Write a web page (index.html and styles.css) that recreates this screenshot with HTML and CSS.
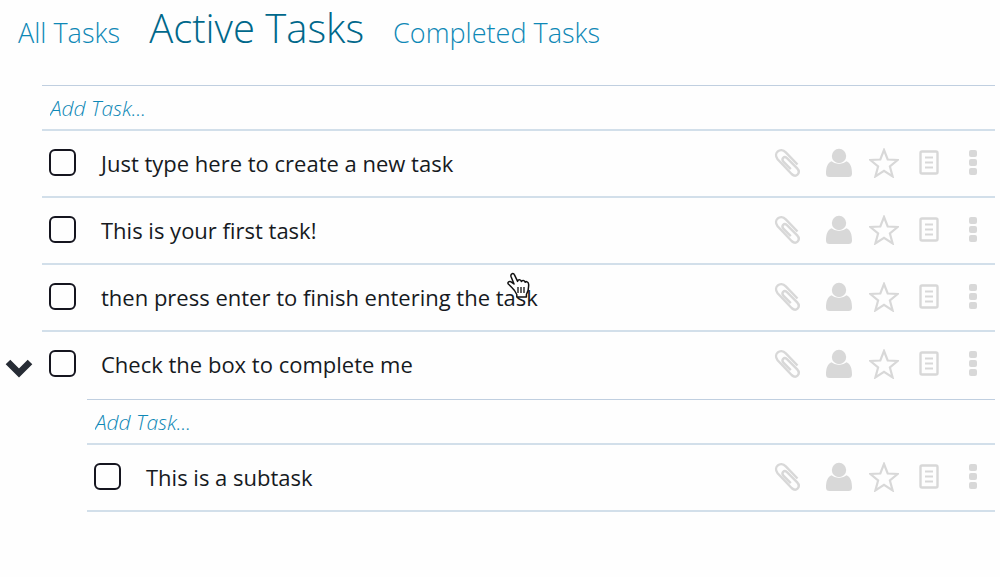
FILE: index.html
```html
<!DOCTYPE html>
<html lang="en">
<head>
<meta charset="utf-8">
<meta name="viewport" content="width=device-width, initial-scale=1">
<title>Tasks</title>
<link rel="stylesheet" href="styles.css">
</head>
<body>
<svg class="sprite" aria-hidden="true">
  <symbol id="clip" viewBox="0 0 30 32"><path d="M24.5 17.5 12.8 5.3C7.2-.2-.2 6.2 4.6 12.2L18.6 27c4.6 4.2 9.6-1 5.6-5.6L14 11.2c-3-2.6-6 .4-3.6 3.4l7.4 7.6" fill="none" stroke="currentColor" stroke-width="2.4"/></symbol>
  <symbol id="person" viewBox="0 0 28 30"><circle cx="14" cy="8" r="7.2"/><path d="M6.5 13.2Q14 19 21.5 13.2C25.5 15 27 19 27 25.500Q27 29 23.500 29H4.500Q1 29 1 25.500C1 19 2.500 15 6.500 13.200Z"/></symbol>
  <symbol id="star" viewBox="0 0 30 30"><path d="m15 2 3.700 9.500 10 .5-7.800 6.500 2.700 9.900L15 22.900l-8.600 5.500L9.100 18.500 1.300 12l10-.5Z" fill="none" stroke="currentColor" stroke-width="2.200"/></symbol>
  <symbol id="note" viewBox="0 0 20 26"><rect x="1.500" y="1.500" width="17" height="22" rx="1.500" fill="none" stroke="currentColor" stroke-width="2.400"/><path d="M6 7.500h8M6 12.500h8M6 17.500h8" stroke="currentColor" stroke-width="2"/></symbol>
  <symbol id="dots" viewBox="0 0 8 28"><rect y="1" width="8" height="7" rx="2"/><rect y="10" width="8" height="7" rx="2"/><rect y="19" width="8" height="7" rx="2"/></symbol>
</svg>

<nav class="tabs">
  <a class="tab" href="#all">All Tasks</a>
  <a class="tab tab-active" href="#active" aria-current="page">Active Tasks</a>
  <a class="tab" href="#completed">Completed Tasks</a>
</nav>

<main class="board">
  <input class="add-task" type="text" placeholder="Add Task..." aria-label="Add task">
  <ul class="list">
    <li class="task">
      <input class="check" type="checkbox" id="t1"><label class="name" for="t1">Just type here to create a new task</label>
      <div class="actions">
        <button class="action clip" aria-label="Attach"><svg><use href="#clip"/></svg></button>
        <button class="action person" aria-label="Assign"><svg><use href="#person"/></svg></button>
        <button class="action star" aria-label="Star"><svg><use href="#star"/></svg></button>
        <button class="action note" aria-label="Notes"><svg><use href="#note"/></svg></button>
        <button class="action dots" aria-label="More"><svg><use href="#dots"/></svg></button>
      </div>
    </li>
    <li class="task">
      <input class="check" type="checkbox" id="t2"><label class="name" for="t2">This is your first task!</label>
      <div class="actions">
        <button class="action clip" aria-label="Attach"><svg><use href="#clip"/></svg></button>
        <button class="action person" aria-label="Assign"><svg><use href="#person"/></svg></button>
        <button class="action star" aria-label="Star"><svg><use href="#star"/></svg></button>
        <button class="action note" aria-label="Notes"><svg><use href="#note"/></svg></button>
        <button class="action dots" aria-label="More"><svg><use href="#dots"/></svg></button>
      </div>
    </li>
    <li class="task">
      <input class="check" type="checkbox" id="t3"><label class="name" for="t3">then press enter to finish entering the task</label>
      <div class="actions">
        <button class="action clip" aria-label="Attach"><svg><use href="#clip"/></svg></button>
        <button class="action person" aria-label="Assign"><svg><use href="#person"/></svg></button>
        <button class="action star" aria-label="Star"><svg><use href="#star"/></svg></button>
        <button class="action note" aria-label="Notes"><svg><use href="#note"/></svg></button>
        <button class="action dots" aria-label="More"><svg><use href="#dots"/></svg></button>
      </div>
    </li>
    <li class="group">
      <div class="task task-parent">
        <button class="toggle" aria-label="Collapse subtasks" aria-expanded="true"><svg viewBox="0 0 28 20"><path d="m3 4 11 11L25 4" fill="none" stroke="currentColor" stroke-width="6.500"/></svg></button>
        <input class="check" type="checkbox" id="t4"><label class="name" for="t4">Check the box to complete me</label>
        <div class="actions">
          <button class="action clip" aria-label="Attach"><svg><use href="#clip"/></svg></button>
          <button class="action person" aria-label="Assign"><svg><use href="#person"/></svg></button>
          <button class="action star" aria-label="Star"><svg><use href="#star"/></svg></button>
          <button class="action note" aria-label="Notes"><svg><use href="#note"/></svg></button>
          <button class="action dots" aria-label="More"><svg><use href="#dots"/></svg></button>
        </div>
      </div>
      <div class="subtasks">
        <input class="add-task" type="text" placeholder="Add Task..." aria-label="Add subtask">
        <ul class="list">
          <li class="task">
            <input class="check" type="checkbox" id="t5"><label class="name" for="t5">This is a subtask</label>
            <div class="actions">
              <button class="action clip" aria-label="Attach"><svg><use href="#clip"/></svg></button>
              <button class="action person" aria-label="Assign"><svg><use href="#person"/></svg></button>
              <button class="action star" aria-label="Star"><svg><use href="#star"/></svg></button>
              <button class="action note" aria-label="Notes"><svg><use href="#note"/></svg></button>
              <button class="action dots" aria-label="More"><svg><use href="#dots"/></svg></button>
            </div>
          </li>
        </ul>
      </div>
    </li>
  </ul>
</main>

<svg class="pointer" viewBox="0 0 24 28" aria-hidden="true"><path d="M8.500 18.500C6 15.500 4 13.500 2.300 12c-1-1.500.5-3.200 2.700-2.200l3 2.200L5 4.500C4.300 1.500 7.500.5 8.600 3.200l3 6.200c.5-2.200 3.200-2 3.800.2.700-1.800 3.200-1.500 3.700.6 1-1.200 3.200-.4 3.500 1.800.3 4-.2 7-2.200 10.500V25H10.800v-2.500Z" fill="#fff" stroke="#111" stroke-width="1.500" stroke-linejoin="round"/><path d="M12 15v6M15 15v6M18 15v6" stroke="#111" stroke-width="1.300"/></svg>
</body>
</html>
```

FILE: styles.css
```css
* {
  box-sizing: border-box;
}

body {
  margin: 0;
  background: #fefefe;
  color: #161a1e;
  font-family: "Open Sans", "Noto Sans", sans-serif;
  font-size: 22px;
}

button {
  padding: 0;
  border: 0;
  background: none;
  color: inherit;
}

.sprite {
  display: none;
}

.tabs {
  display: flex;
  align-items: baseline;
  gap: 29px;
  padding: 0 18px;
}

.tab {
  color: #0e88b6;
  font-size: 27px;
  font-weight: 300;
  line-height: 56px;
  text-decoration: none;
}

.tab-active {
  color: #00688b;
  font-size: 40px;
}

.board {
  margin: 24px 5px 0 42px;
}

.add-task {
  display: block;
  width: 100%;
  height: 46px;
  padding: 0 8px;
  border: 0;
  border-top: 1px solid #c0cfe0;
  border-bottom: 2px solid #d2dfea;
  background: none;
  color: #0e88b6;
  font: italic 300 21px "Open Sans", "Noto Sans", sans-serif;
}

.add-task::placeholder {
  color: #0e88b6;
  opacity: 1;
}

.list {
  margin: 0;
  padding: 0;
  list-style: none;
}

.task {
  display: flex;
  align-items: center;
  height: 67px;
  padding: 0 18px 2px 7px;
  border-bottom: 2px solid #d2dfea;
}

.task-parent {
  position: relative;
  border-bottom-color: transparent;
}

.check {
  appearance: none;
  flex: none;
  width: 27px;
  height: 27px;
  margin: 0 25px 0 0;
  border: 2px solid #15151f;
  border-radius: 6px;
}

.name {
  flex: 1;
}

.actions {
  display: flex;
  align-items: center;
  color: #d8d8d8;
}

.action {
  display: flex;
}

.action svg {
  width: 100%;
  height: 100%;
  fill: currentColor;
}

.clip {
  width: 30px;
  height: 32px;
  margin-right: 22px;
}

.person {
  width: 28px;
  height: 30px;
  margin-right: 16px;
}

.star {
  width: 30px;
  height: 30px;
  margin-right: 20px;
}

.note {
  width: 20px;
  height: 26px;
  margin-right: 30px;
}

.dots {
  width: 8px;
  height: 28px;
}

.toggle {
  position: absolute;
  left: -37px;
  top: 26px;
  width: 28px;
  height: 20px;
  color: #272c35;
}

.toggle svg {
  display: block;
}

.subtasks {
  margin-left: 45px;
}

.pointer {
  position: absolute;
  left: 506px;
  top: 272px;
  width: 24px;
  height: 28px;
}
```
